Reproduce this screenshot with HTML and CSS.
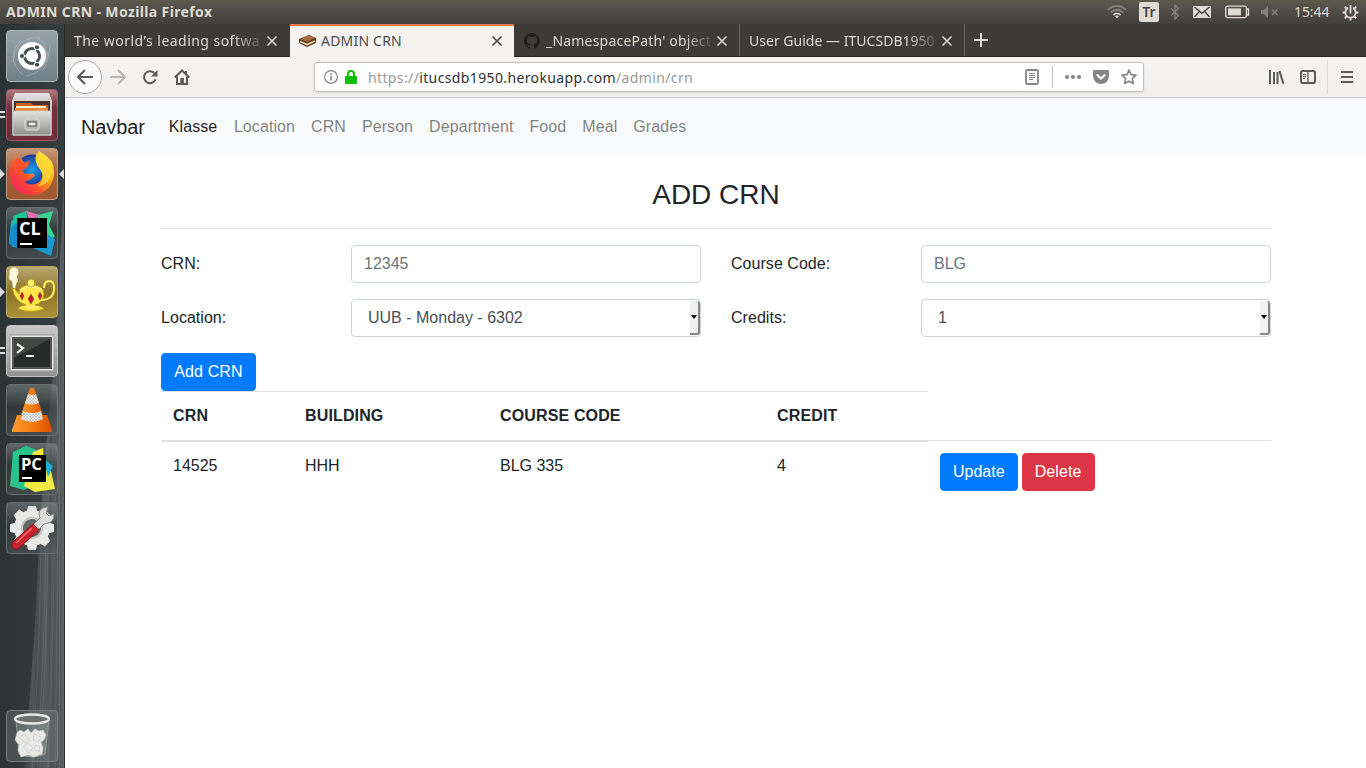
FILE: index.html
```html
<!DOCTYPE html>
<html lang="en">
<head>
<meta charset="utf-8">
<title>ADMIN CRN</title>
<link rel="stylesheet" href="styles.css">
</head>
<body>
<header class="panel">
  <span class="panel-title">ADMIN CRN - Mozilla Firefox</span>
  <div class="indicators">
    <svg class="wifi" width="20" height="14" viewBox="0 0 20 14" fill="none" stroke-width="1.7"><path stroke="#83817a" d="M.8 4.8Q10-3 19.2 4.8M3.7 7.5Q10 2 16.3 7.5"/><path stroke="#dfdbd2" d="M6.4 10Q10 6.8 13.6 10"/><path fill="#dfdbd2" d="m10 13.3-2-2.1q2-1.5 4 0z"/></svg>
    <span class="keyboard">Tr</span>
    <svg class="bluetooth" width="10" height="16" viewBox="0 0 10 16" fill="none" stroke="#83817a" stroke-width="1.3"><path d="m1 4.5 7.5 7L5 15V1l3.5 3.5-7.5 7"/></svg>
    <svg class="mail" width="18" height="12" viewBox="0 0 18 12"><path fill="#dfdbd2" d="M0 0h18v12H0z"/><path fill="none" stroke="#45433e" stroke-width="1.3" d="m1.500 1 7.500 6.300L16.500 1M1.500 11 6.300 5.500M16.500 11l-4.800-5.500"/></svg>
    <svg class="battery" width="25" height="14" viewBox="0 0 25 14"><rect x=".7" y="1.200" width="20.800" height="11.400" rx="2" fill="none" stroke="#dfdbd2" stroke-width="1.300"/><path fill="#dfdbd2" d="M3 3.400h13v7H3z"/><path fill="none" stroke="#dfdbd2" stroke-width="1.300" d="M21.500 4h2v6h-2"/></svg>
    <svg class="sound" width="18" height="12" viewBox="0 0 18 12"><path fill="#83817a" d="M0 4h3l4-4v12L3 8H0z"/><path stroke="#83817a" stroke-width="1.600" d="m11 3.500 5.500 5.500M16.500 3.500 11 9"/></svg>
    <span class="clock">15:44</span>
    <svg class="session" width="17" height="17" viewBox="-8.500 -8.500 17 17" fill="none" stroke="#dfdbd2"><path stroke-width="1.800" d="M-2.400-4.600a5.200 5.200 0 1 0 4.800 0M0-7.500V1"/><path stroke-width="2" d="M5 0h3M-5 0h-3M0 5v3M3.500 3.500l2.200 2.200M-3.500 3.500l-2.200 2.200M3.700-3.700l2-2M-3.700-3.700l-2-2"/></svg>
  </div>
</header>
<div class="desktop">
  <aside class="launcher">
    <svg class="wallpaper" width="65" height="744" viewBox="0 0 65 744">
      <defs><linearGradient id="bark" x1="0" x2="1"><stop stop-color="#394345"/><stop offset=".22" stop-color="#525a5c"/><stop offset=".3" stop-color="#464f51"/><stop offset=".55" stop-color="#5a6163"/><stop offset=".63" stop-color="#4a5254"/><stop offset="1" stop-color="#5b6264"/></linearGradient></defs>
      <path fill="url(#bark)" d="M65 120q-6 190-22 330l-9 166-10 128h41z" opacity=".88"/>
      <path fill="none" stroke="#8c9496" stroke-opacity=".24" d="M61 220q-2 200-6 524M57 320q-1 190-8 424M49 410q0 170-9 334M41 500q0 110-9 244M63 300v444M59.500 380v364M53 400q0 180-5 344M46 500q-1 120-9 244"/>
    </svg>
    <div class="tile dash"><svg viewBox="0 0 52 52"><g fill="none" stroke="#c3cbcd" stroke-opacity=".42"><path d="M31 6q18 17 6 34M44 16Q42 42 20 46M17 45Q-2 28 15 10M7 32Q10 6 34 8"/></g><circle cx="26" cy="26" r="14" fill="#fff"/><circle cx="26" cy="26" r="7.600" fill="none" stroke="#4b5455" stroke-width="3"/><path stroke="#fff" stroke-width="1.500" d="M26 26h-10M26 26l5-9M26 26l5 9"/><circle cx="26" cy="26" r="5" fill="#fff"/><g fill="#3e4748" stroke="#fff"><circle cx="16" cy="26" r="2.500"/><circle cx="31" cy="17.300" r="2.500"/><circle cx="31" cy="34.700" r="2.500"/></g></svg></div>
    <div class="tile files"><i class="pips"></i><svg viewBox="0 0 52 52"><defs><linearGradient id="metal" x2="0" y2="1"><stop stop-color="#e3e3e1"/><stop offset="1" stop-color="#8f908c"/></linearGradient></defs><path fill="url(#metal)" d="M9 4h34l3 8v34q0 1-2 1H8q-2 0-2-1V12z"/><path fill="#50312c" d="M8 12h36v11H8z"/><path fill="#c5651d" d="M10 14h15l2 2h15v8H10z"/><path fill="#faf0cd" d="M10 17h30v2H10z"/><path fill="#e88932" d="M9 19h33v5H9z"/><path fill="url(#metal)" stroke="#ccc" d="M7 22h38v24H7z"/><rect x="19" y="30" width="14" height="11" rx="2" fill="#b5b6b4" stroke="#ddd"/><rect x="22" y="33" width="8" height="4" fill="#eee" stroke="#444"/></svg></div>
    <div class="tile firefox"><i class="pointer"></i><i class="pointer right"></i><svg viewBox="0 0 52 52"><defs><linearGradient id="fox" x1=".1" y1=".9" x2=".9" y2=".1"><stop stop-color="#f7245f"/><stop offset=".32" stop-color="#ff4a2e"/><stop offset=".62" stop-color="#ff9d19"/><stop offset="1" stop-color="#ffef35"/></linearGradient><radialGradient id="globe"><stop stop-color="#16a5e8"/><stop offset="1" stop-color="#253796"/></radialGradient></defs><circle cx="26" cy="22" r="15.500" fill="url(#globe)"/><path fill="url(#fox)" d="M11 7q-6 6-7 18c-.5 13 9 22 22 22s23-11 22-24q0-10-9-16-5-3-6-4-5 6-2 13c1 3 7 8 5 14-2 7-13 9-18 3 4 1 8-3 11-5-1-3-5-2-7-2-4 0-7-3-5-6 1-2 5-1 5-3-1-3-6-2-6-6q-3 0-5 3z"/><path fill="#ffdf37" d="M33 3q-6 6-2 14c2 4 8 8 5 15-1 3-3 5-5 6 9 0 16-7 15-19Q44 11 33 3z" opacity=".7"/><path fill="#ff4e2e" d="M10 10q5 1 8 5l6-3-2 7-6 4-5 4q-5-6-1-17z" opacity=".85"/></svg></div>
    <div class="tile dark"><svg viewBox="0 0 52 52"><path fill="#1bb3a8" d="m5 14 15-9v36l-13-1-4-4z"/><path fill="#168cd0" d="m4 22 8-8v27l-9-4z"/><path fill="#dd70b4" d="m20 4 14 4-7 15z"/><path fill="#18c995" d="m7 9 13-5 2 12H8z"/><path fill="#36d890" d="m32 8 15-4-4 14 6 12-14 5z"/><path fill="#1b98cf" d="m25 38 16-11 8 5-4 17-18-8z"/><path d="M11 11h30v30H11z"/><path fill="#fff" d="M14 36h12v2H14z"/><text x="13" y="28" class="ide">CL</text></svg></div>
    <div class="tile lamp"><i class="pointer"></i><svg viewBox="0 0 52 52"><g fill="#fff8df"><circle cx="8" cy="6" r="4.500"/><circle cx="7" cy="11" r="4"/><circle cx="9" cy="14" r="3"/><path d="M6 14h5l-2 9H7z"/></g><g stroke="#b69812"><path fill="#ffe44b" d="m6 22 3 1 4 5q-1-6 5-8 7-4 14 0 6 2 6 8-1 9-9 11 8 1 9 4-13 5-26 0 0-3 8-4Q9 36 6 22z"/><circle cx="25" cy="17" r="4" fill="#fff071"/><path fill="none" stroke="#fff05b" stroke-width="2" d="M38 22q0-7 5-7 6 0 5 9-1 10-13 10"/></g><path fill="none" stroke="#fff8aa" d="M15 23q10-4 21 0M20 41h12"/><g fill="#c4152f" stroke="#86501a" stroke-width=".5"><path d="m16 26 2 4-2 4-2-4zM25 28l3 5-3 5-3-5zM34 26l2 4-2 4-2-4z"/></g></svg></div>
    <div class="tile terminal"><i class="pips"></i><svg viewBox="0 0 52 52"><path fill="#e5e5e5" stroke="#999" d="M4 10h44v36H4z"/><path fill="#282a29" stroke="#555" stroke-width="2" d="M7 13h38v30H7z"/><path fill="#6c6e6b" opacity=".4" d="M8 14h36L8 33z"/><path fill="none" stroke="#eee" stroke-width="2.200" d="m11 19 6 4-6 5M20 31h8"/></svg></div>
    <div class="tile dark"><svg viewBox="0 0 52 52"><defs><linearGradient id="cone"><stop stop-color="#ff9b36"/><stop offset=".55" stop-color="#f4790b"/><stop offset="1" stop-color="#d94e00"/></linearGradient><pattern id="mesh" width="3" height="3" patternUnits="userSpaceOnUse"><path fill="#eee" d="M0 0h3v3H0z"/><path stroke="#bdbdb9" stroke-width=".6" d="m0 0 3 3M3 0 0 3"/></pattern></defs><path fill="url(#cone)" d="M11 31h30l5 15v2H6v-2z"/><path fill="url(#cone)" d="M24 4h4l10 30q-12 6-24 0z"/><path fill="url(#mesh)" d="m22 10-3 9q7 3 14 0l-3-9q-4 2-8 0zM17 27l-2 8q11 6 22 0l-2-8q-9 4-18 0z"/></svg></div>
    <div class="tile dark"><svg viewBox="0 0 52 52"><path fill="#27c38a" d="m7 9 13-6 16 6 4 28-22 10-14-4z"/><path fill="#f2e944" d="m27 9 10-4 1 16 7 7 4 18-20 3-11-6z"/><path fill="#18add3" d="m37 15 10 8-5 11z"/><path d="M13 12h27v27H13z"/><path fill="#fff" d="M16 34h10v2H16z"/><text x="15" y="27" class="ide small">PC</text></svg></div>
    <div class="tile dark"><svg viewBox="0 0 52 52"><g transform="translate(26 26)"><g fill="#e9e9e7"><circle r="18"/><path d="M-4-22h8l2 9h-12zM-4 22h8l2-9h-12z"/><path d="M-4-22h8l2 9h-12zM-4 22h8l2-9h-12z" transform="rotate(45)"/><path d="M-4-22h8l2 9h-12zM-4 22h8l2-9h-12z" transform="rotate(90)"/><path d="M-4-22h8l2 9h-12zM-4 22h8l2-9h-12z" transform="rotate(135)"/></g><circle r="10" fill="#626665" stroke="#c1c3c0" stroke-width="2"/></g><path fill="#dededc" stroke="#8f918f" d="m25 25 9-9q-3-7 3-10l5-1-2 6 3 3 5-2q0 8-6 9l-4 1-9 9z"/><path fill="#c9232c" stroke="#8c1018" d="m27 22 6 6-20 18q-4 3-7-1-1-3 1-5z"/><path stroke="#ff7770" stroke-width="1.500" d="M26 26 10 41"/></svg></div>
    <div class="tile trash"><svg viewBox="0 0 52 52"><path fill="#d9dddb" fill-opacity=".2" stroke="#a8adab" stroke-opacity=".7" d="m10 10 3 34q13 6 26 0l4-34z"/><g fill="#e8e9e6" stroke="#c9cbc7" stroke-width=".6"><path d="m11 23 3-3 4 2 4-3 3 4 4-4 4 2 4-1 3 5-2 5-3 2 2 6-1 6-8 3-6-2-7 2-3-7 1-5-4-5z"/><path d="m13 28 5-4 6 6-4 3zM28 24l7 3-3 5-5-2zM17 37l5-4 5 5-4 5zM29 35l5 1-1 6-5-2z"/></g><ellipse cx="26" cy="9" rx="17" ry="4.500" fill="#6b7271" stroke="#e7e8e4" stroke-width="2.500"/></svg></div>
  </aside>
  <section class="browser">
    <div class="tabs">
      <div class="tab first"><span class="tab-text fade t1">The world’s leading softwa</span><svg class="close" viewBox="0 0 12 12"><path d="m1.500 1.500 9 9M10.500 1.500l-9 9"/></svg></div>
      <div class="tab active"><svg class="favicon" viewBox="0 0 17 14"><path fill="#5f3420" d="m0 5 10-4 7 3v5l-9 4-8-4z"/><path fill="#a96d43" d="m1 5 9-4 6 3-8 4z"/><path fill="none" stroke="#eee0a8" stroke-width="1.700" d="m1 7.500 7 3L16 7"/></svg><span class="tab-text t2">ADMIN CRN</span><svg class="close" viewBox="0 0 12 12"><path d="m1.500 1.500 9 9M10.500 1.500l-9 9"/></svg></div>
      <div class="tab github"><svg class="gh" viewBox="0 0 16 16"><path fill="#1d1d1b" d="M8 0a8 8 0 0 0-2.500 15.600c.4.100.5-.2.500-.4v-1.500c-2.200.5-2.700-1-2.700-1-.4-.9-.9-1.200-.9-1.200-.7-.5.100-.5.100-.5.800.1 1.200.8 1.200.8.700 1.200 1.900.9 2.400.7 0-.5.200-.9.500-1.100-1.800-.2-3.700-.9-3.700-4 0-.9.300-1.600.8-2.100-.1-.2-.4-1 .1-2.200 0 0 .7-.2 2.200.8a7.600 7.600 0 0 1 4 0c1.500-1 2.200-.8 2.200-.8.500 1.200.2 2 .1 2.200.5.500.8 1.200.8 2.100 0 3.100-1.900 3.800-3.700 4 .3.200.6.700.6 1.500v2.200c0 .2.100.5.500.4A8 8 0 0 0 8 0z"/></svg><span class="tab-text fade t3">_NamespacePath' object</span><svg class="close" viewBox="0 0 12 12"><path d="m1.500 1.500 9 9M10.500 1.500l-9 9"/></svg></div>
      <div class="tab guide"><span class="tab-text fade t4">User Guide — ITUCSDB1950</span><svg class="close" viewBox="0 0 12 12"><path d="m1.500 1.500 9 9M10.500 1.500l-9 9"/></svg></div>
      <svg class="new-tab" width="14" height="14" viewBox="0 0 14 14"><path d="M7 0v14M0 7h14"/></svg>
    </div>
    <div class="toolbar">
      <div class="nav-icons">
        <span class="back"><svg width="16" height="16" viewBox="0 0 16 16"><path d="M16 8H1M8 1 1 8l7 7"/></svg></span>
        <svg class="forward" width="16" height="16" viewBox="0 0 16 16"><path d="M0 8h15M8 1l7 7-7 7"/></svg>
        <svg width="16" height="16" viewBox="0 0 16 16"><path d="M13.600 10.400A6 6 0 1 1 12.400 4"/><path fill="#5b5b5b" stroke="none" d="M15.500 1v6.500H9z"/></svg>
        <svg width="16" height="16" viewBox="0 0 16 16"><path d="m.8 8.500 7.200-7 7.200 7M3 7.500V15h10V7.500"/><path fill="#5b5b5b" stroke="none" d="M6.300 9h3.600v6H6.300zM11 2h2v4h-2z"/></svg>
      </div>
      <div class="address">
        <svg class="info" width="14" height="14" viewBox="0 0 14 14"><circle cx="7" cy="7" r="6.400"/><path stroke-width="1.600" d="M7 6v4.500M7 3.200v1.700"/></svg>
        <svg class="lock" width="12" height="14" viewBox="0 0 12 14"><path fill="none" stroke="#12bc00" stroke-width="2" d="M3 7V4a3 3 0 0 1 6 0v3"/><rect y="6" width="12" height="8" rx="1" fill="#12bc00" stroke="none"/></svg>
        <span class="url">https://<b>itucsdb1950.herokuapp.com</b>/admin/crn</span>
        <svg class="reader" width="14" height="16" viewBox="0 0 14 16"><rect x="1" y="1" width="12" height="14" rx="1.500" stroke-width="1.800"/><path stroke-width="1" d="M4 4.500h6M4 6.500h6M4 8.500h6M4 10.500h4"/></svg>
        <i class="divider"></i>
        <svg width="16" height="4" viewBox="0 0 16 4"><g fill="#858585" stroke="none"><circle cx="2" cy="2" r="2"/><circle cx="8" cy="2" r="2"/><circle cx="14" cy="2" r="2"/></g></svg>
        <svg class="pocket" width="16" height="14" viewBox="0 0 16 14"><path fill="#858585" stroke="none" d="M1 0h14q1 0 1 1v5a8 8 0 0 1-16 0V1q0-1 1-1z"/><path stroke="#fff" stroke-width="2" stroke-linecap="round" d="m4.300 5 3.700 3.500L11.700 5"/></svg>
        <svg class="star" width="16" height="16" viewBox="0 0 16 16"><path stroke-width="1.700" stroke-linejoin="round" d="m8 1 2 4.600 5 .5-3.700 3.500 1 5L8 12.200l-4.300 2.400 1-5L1 6.100l5-.5z"/></svg>
      </div>
      <div class="tools">
        <svg width="16" height="14" viewBox="0 0 16 14"><path d="M2 0v14M6 2v12M9.500 2v12M11.500 1l4 13"/></svg>
        <svg width="16" height="14" viewBox="0 0 16 14"><rect x="1" y="1" width="14" height="12" rx="1.800"/><path stroke-width="1.300" d="M8 1v12"/><path stroke-width="1" d="M3 4.500h3M3 6.500h3M3 8.500h2"/></svg>
        <i class="divider"></i>
        <svg width="12" height="12" viewBox="0 0 12 12"><path d="M0 1h12M0 6h12M0 11h12"/></svg>
      </div>
    </div>
    <nav class="navbar"><a class="brand">Navbar</a><a class="selected">Klasse</a><a>Location</a><a>CRN</a><a>Person</a><a>Department</a><a>Food</a><a>Meal</a><a>Grades</a></nav>
    <main class="container">
      <h3>ADD CRN</h3>
      <form>
        <div class="fields">
          <label for="crn">CRN:</label><input id="crn" placeholder="12345">
          <label class="second" for="code">Course Code:</label><input id="code" placeholder="BLG">
          <label>Location:</label><div class="select">UUB - Monday - 6302<i></i></div>
          <label class="second">Credits:</label><div class="select">1<i></i></div>
        </div>
        <button class="btn add" type="button">Add CRN</button>
      </form>
      <table>
        <colgroup><col class="c1"><col class="c2"><col class="c3"><col class="c4"><col class="c5"></colgroup>
        <thead><tr><th>CRN</th><th>BUILDING</th><th>COURSE CODE</th><th>CREDIT</th></tr></thead>
        <tbody><tr><td>14525</td><td>HHH</td><td>BLG 335</td><td>4</td><td class="action-cell"><div class="actions"><button class="btn">Update</button><button class="btn danger">Delete</button></div></td></tr></tbody>
      </table>
    </main>
  </section>
</div>
</body>
</html>
```

FILE: styles.css
```css
* { box-sizing: border-box; }
body { margin: 0; width: 1366px; height: 768px; overflow: hidden; background: #fff; font: 16px/24px "Liberation Sans", sans-serif; color: #212529; }
svg { display: block; flex: none; }
.panel { height: 24px; display: flex; align-items: center; justify-content: space-between; padding: 0 7px 0 6px; background: linear-gradient(#5c594d, #565349 20%, #403f3a); color: #dfdbd2; font-family: "Noto Sans", sans-serif; }
.panel-title { font-size: 14px; font-weight: 700; letter-spacing: .37px; white-space: nowrap; }
.indicators { display: flex; align-items: center; height: 24px; }
.keyboard { width: 20px; height: 20px; margin-left: 12px; border-radius: 2px; background: #dfdbd2; color: #45433e; font-size: 14px; font-weight: 600; line-height: 20px; text-align: center; }
.bluetooth { margin-left: 11px; }
.mail { margin-left: 13px; }
.battery { margin-left: 14px; }
.sound { margin-left: 11px; }
.clock { width: 36px; margin-left: 15px; font-size: 14px; letter-spacing: -.1px; }
.session { margin-left: 12px; }

.desktop { display: flex; height: 744px; }
.launcher { position: relative; width: 65px; flex: none; padding: 6px; display: flex; flex-direction: column; gap: 7px; background: linear-gradient(90deg, #2c3335, #343d40); border-right: 1px solid #252a2b; overflow: hidden; }
.wallpaper { position: absolute; left: 0; top: 0; }
.tile { position: relative; width: 52px; height: 52px; flex: none; border: 1px solid #8b8f8d; border-radius: 4px; background: linear-gradient(#747a7a, #4c5454); }
.tile svg { width: 52px; height: 52px; margin: -1px; }
.dash { background: linear-gradient(#96a4aa, #6f8087); border-color: #a9b1b2; }
.files { background: linear-gradient(#b17980, #71313d 35%, #722d39); border-color: #9c5962; }
.firefox { background: linear-gradient(#c4977b, #a96138 45%, #9e5930); border-color: #c69a7e; }
.dark { background: linear-gradient(rgba(145,151,151,.5), rgba(52,58,60,.45) 45%, rgba(85,91,92,.5)); border-color: #686e6e; }
.lamp { background: linear-gradient(#baa970, #8b7328 50%, #aa9139); border-color: #b8a666; }
.terminal { background: linear-gradient(#c6c6c6, #929292); border-color: #c1c1c1; }
.trash { margin-top: auto; background: rgba(125,134,135,.35); border-color: #778080; }
.ide { font: 700 18px "Open Sans", sans-serif; fill: #fff; }
.small { font-size: 16.5px; }
.pointer { position: absolute; left: -7px; top: 20px; border: 5px solid transparent; border-left-color: #dedede; border-right: 0; }
.pointer.right { left: auto; right: -7px; border-left: 0; border-right: 5px solid #dedede; }
.pips { position: absolute; left: -7px; top: 21px; width: 5px; height: 7px; border-top: 2px solid #dedede; border-bottom: 2px solid #dedede; }

.browser { width: 1301px; background: #fff; }
.tabs { height: 33px; display: flex; background: #3c3b37; border-bottom: 1px solid #272622; color: #dfdbd2; font: 14px/32px "Noto Sans", sans-serif; }
.tab { display: flex; align-items: center; height: 32px; width: 225px; padding: 1px 12px 0 9px; }
.tab.active { height: 33px; width: 224px; padding: 0 11px 1px 9px; border-top: 2px solid #f07746; background: #f4f3f2; color: #4c4c4c; line-height: 30px; }
.tab-text { white-space: nowrap; overflow: hidden; }
.fade { -webkit-mask-image: linear-gradient(90deg, #000 84%, rgba(0,0,0,.1)); mask-image: linear-gradient(90deg, #000 84%, rgba(0,0,0,.1)); }
.t1 { width: 189px; letter-spacing: .46px; }
.t2 { margin-left: 5px; width: 160px; letter-spacing: .2px; }
.t3 { margin-left: 6px; width: 166px; letter-spacing: .2px; }
.t4 { width: 189px; letter-spacing: .02px; }
.close { width: 12px; height: 12px; margin-left: auto; stroke: currentColor; stroke-width: 1.6; }
.favicon { width: 17px; height: 14px; }
.tab.github { width: 226px; padding: 1px 11px 0 10px; border-right: 1px solid #686762; }
.tab.guide { padding-right: 11px; border-right: 1px solid #686762; }
.gh { width: 16px; height: 16px; }
.new-tab { margin: 9px 0 0 9px; stroke: #dfdbd2; stroke-width: 2; }
.toolbar { height: 41px; display: flex; align-items: center; background: linear-gradient(#f5f4f3, #f1f0ef); border-bottom: 1px solid #c6c5c4; }
.toolbar svg { fill: none; stroke: #5b5b5b; stroke-width: 2; }
.nav-icons { display: flex; align-items: center; gap: 16px; width: 249px; padding-left: 3px; }
.back { width: 34px; height: 34px; border: 1px solid #aaa; border-radius: 50%; background: #fbfbfb; display: grid; place-items: center; }
.nav-icons svg:nth-of-type(1) { margin-left: -8px; }
.nav-icons .back svg { margin: 0; }
.nav-icons .forward { stroke: #b7b7b6; }
.address { width: 830px; height: 30px; display: flex; align-items: center; padding: 0 6px 0 9px; border: 1px solid #c0bfbe; border-radius: 3px; background: #fff; box-shadow: 0 1px 3px rgba(0,0,0,.08); }
.address svg { stroke: #858585; }
.address .info { stroke-width: 1.2; }
.lock { margin-left: 7px; }
.url { margin-left: 11px; padding-top: 1px; color: #999; font: 14px/28px "Noto Sans", sans-serif; letter-spacing: .37px; white-space: nowrap; }
.url b { font-weight: 400; color: #303030; }
.reader { margin-left: auto; }
.divider { width: 1px; height: 22px; margin: 0 12px 0 13px; background: #c5c5c5; }
.pocket { margin-left: 12px; }
.star { margin-left: 12px; }
.tools { display: flex; align-items: center; margin-left: 124px; }
.tools svg + svg { margin-left: 16px; }
.tools .divider { height: 34px; margin: 0 13px 0 11px; background: #dadada; }
.navbar { height: 56px; display: flex; align-items: center; gap: 16px; padding: 2px 16px 0; background: #f8f9fa; color: rgba(0,0,0,.5); letter-spacing: .08px; }
.brand { color: rgba(0,0,0,.9); font-size: 20px; letter-spacing: -.12px; margin-right: 8px; }
.selected { color: rgba(0,0,0,.9); margin-right: .6px; }
.container { width: 1110px; margin-left: 96px; }
h3 { height: 75px; margin: 0; padding-top: 24px; border-bottom: 1px solid #e5e5e5; font-size: 28px; font-weight: 500; line-height: 34px; text-align: center; }
form { padding-top: 16px; }
.fields { display: grid; grid-template-columns: 190px 350px 220px 350px; row-gap: 16px; }
label { padding-top: 7px; letter-spacing: .04px; }
label.second { padding-left: 30px; }
input, .select { width: 350px; height: 38px; padding: 6px 12px; border: 1px solid #ced4da; border-radius: 4px; background: #fff; font: inherit; color: #495057; }
input::placeholder { color: #6c757d; opacity: 1; }
.select { display: flex; padding: 1px 0 1px 16px; line-height: 34px; justify-content: space-between; }
.select i { width: 10px; border-right: 2px solid #858585; border-bottom: 2px solid #858585; border-radius: 0 3px 3px 0; background: #f1f1f0; display: grid; place-items: center; }
.select i::before { content: ""; border: 3px solid transparent; border-top: 4px solid #000; border-bottom: 0; }
.btn { height: 38px; padding: 6px 12px; border: 1px solid #007bff; border-radius: 4px; background: #007bff; color: #fff; font: inherit; }
.btn.add { display: block; width: 95px; margin-top: 16px; padding: 6px 0; letter-spacing: .12px; }
.btn.danger { width: 73px; padding: 6px 0; background: #dc3545; border-color: #dc3545; letter-spacing: .08px; }
table { width: 1110px; table-layout: fixed; border-collapse: collapse; }
.c1 { width: 132px; } .c2 { width: 195px; } .c3 { width: 277px; } .c4 { width: 163px; } .c5 { width: 343px; }
th, td { padding: 12px; border-top: 1px solid #dee2e6; text-align: left; vertical-align: top; }
th { border-bottom: 2px solid #dee2e6; letter-spacing: .14px; }
td.action-cell { border-top-color: transparent; }
.actions { display: flex; gap: 4px; margin: -14px -12px 0; padding: 12px 12px 0; border-top: 1px solid #dee2e6; }
```
